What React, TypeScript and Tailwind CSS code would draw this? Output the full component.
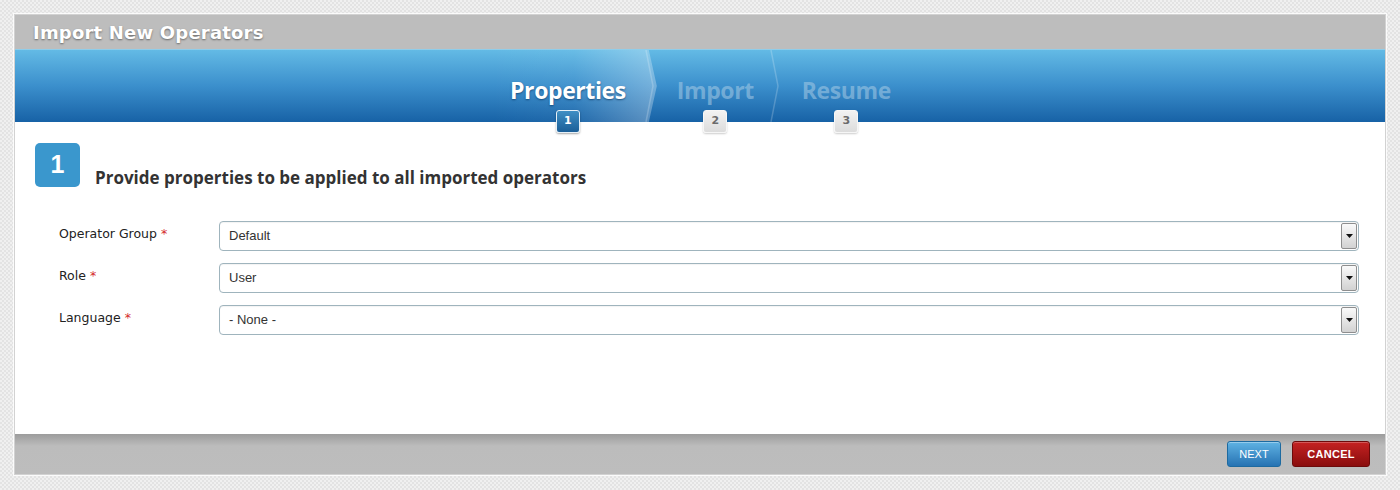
import React, { FC } from 'react';

const steps = [
  { label: 'Properties', n: 1, pad: 'pl-[19px] pr-[25px]' },
  { label: 'Import', n: 2, pad: 'pl-[26px] pr-[22px]' },
  { label: 'Resume', n: 3, pad: 'px-[26px]' },
];

const fields = [
  { label: 'Operator Group', value: 'Default' },
  { label: 'Role', value: 'User' },
  { label: 'Language', value: '- None -' },
];

const Chevron: FC = () => (
  <svg className="absolute right-[-4px] top-0 h-full w-[10px]" viewBox="0 0 10 73" preserveAspectRatio="none">
    <path d="M1 0 L8 36.5 L1 73" fill="none" stroke="rgba(255,255,255,0.2)" strokeWidth="1.5" />
  </svg>
);

const StepTab: FC<{ label: string; n: number; pad: string; active: boolean; last: boolean }> = ({ label, n, pad, active, last }) => (
  <div className={`relative flex h-full flex-col items-center justify-end ${pad}`}>
    {active && (
      <div className="absolute inset-y-0 left-0 right-[-6px] bg-gradient-to-r from-transparent via-[rgba(255,255,255,0.04)] to-[rgba(255,255,255,0.3)] [clip-path:polygon(0_0,calc(100%-8px)_0,100%_50%,calc(100%-8px)_100%,0_100%)]" />
    )}
    {!last && <Chevron />}
    <span
      className={`relative text-[23px] font-bold leading-none tracking-[-0.4px] font-['Open_Sans',sans-serif] ${active ? 'text-white [text-shadow:0_1px_2px_rgba(0,40,80,0.6)]' : 'text-[rgba(170,205,230,0.55)]'}`}
    >
      {label}
    </span>
    <span
      className={`relative z-10 mt-[8px] -mb-[11px] flex h-[23px] w-[24px] items-center justify-center rounded-[3px] text-[11px] font-bold font-['DejaVu_Sans',sans-serif] ${active ? 'border border-[#e6f0f7] bg-gradient-to-b from-[#3f8fc4] to-[#1b5f98] text-white shadow-[0_1px_2px_rgba(0,0,0,0.35)]' : 'border border-[#f6f6f6] bg-gradient-to-b from-[#f2f2f2] to-[#dcdcdc] text-[#6b6b6b] shadow-[0_1px_2px_rgba(0,0,0,0.2)]'}`}
    >
      {n}
    </span>
  </div>
);

const SelectBox: FC<{ value: string }> = ({ value }) => (
  <div className="flex h-[30px] flex-1 items-center rounded-[4px] border border-[#9fb4bd] bg-white pl-[9px] pr-[1px] shadow-[inset_0_1px_1px_rgba(0,0,0,0.05)]">
    <span className="flex-1 text-[13px] text-[#333] font-['Liberation_Sans',Arial,sans-serif]">{value}</span>
    <span className="flex h-[26px] w-[16px] items-center justify-center rounded-[2px] border border-[#8e8e8e] bg-gradient-to-b from-[#fafafa] to-[#d2d2d2]">
      <svg width="7" height="4" viewBox="0 0 7 4">
        <path d="M0 0 H7 L3.5 4 Z" fill="#111" />
      </svg>
    </span>
  </div>
);

export default function App() {
  return (
    <div className="h-[490px] w-[1400px] bg-[#ebebeb] bg-[repeating-conic-gradient(#e3e3e3_0%_25%,#f0f0f0_0%_50%)] bg-[length:4px_4px] pl-[14px] pr-[14px] pt-[14px]">
      <div className="flex w-[1372px] flex-col border border-[#d2d2d2] bg-white shadow-[0_0_0_1px_rgba(255,255,255,0.8)]">
        {/* title bar */}
        <div className="flex h-[34px] items-center bg-[#bdbdbd] pl-[18px]">
          <h1 className="text-[18px] font-bold tracking-[0.2px] text-white font-['DejaVu_Sans',sans-serif] [text-shadow:0_1px_2px_rgba(0,0,0,0.45)]">
            Import New Operators
          </h1>
        </div>

        {/* wizard steps */}
        <div className="relative z-10 flex h-[73px] justify-center border-t border-[#8fcdea] bg-gradient-to-b from-[#63bae5] via-[#3b8fcc] to-[#1762a6]">
          <div className="ml-[8px] flex h-full">
            {steps.map((s, i) => (
              <StepTab key={s.n} label={s.label} n={s.n} pad={s.pad} active={i === 0} last={i === steps.length - 1} />
            ))}
          </div>
        </div>

        {/* content */}
        <div className="flex h-[312px] flex-col bg-white pl-[20px] pr-[26px] pt-[21px]">
          <div className="flex items-end">
            <div className="flex h-[44px] w-[45px] items-center justify-center rounded-[5px] bg-[#3a97cd] text-[25px] font-bold text-white font-['Liberation_Sans',Arial,sans-serif]">
              1
            </div>
            <h2 className="mb-[-3px] ml-[15px] text-[17px] font-bold text-[#333] font-['Open_Sans',sans-serif]">
              Provide properties to be applied to all imported operators
            </h2>
          </div>

          <div className="mt-[34px] flex flex-col gap-[12px] pl-[24px]">
            {fields.map((f) => (
              <div key={f.label} className="flex items-start">
                <label className="w-[160px] pt-[4px] text-[12.5px] text-[#222] font-['DejaVu_Sans',sans-serif]">
                  {f.label} <span className="text-[#d42a2a]">*</span>
                </label>
                <SelectBox value={f.value} />
              </div>
            ))}
          </div>
        </div>

        {/* footer */}
        <div className="flex h-[40px] items-center justify-end gap-[11px] bg-gradient-to-b from-[#9c9c9c] via-[#bcbcbc] via-30% to-[#bdbdbd] pr-[15px]">
          <button className="h-[26px] w-[54px] rounded-[3px] border border-[#1d6aa0] bg-gradient-to-b from-[#5fb2e3] to-[#2673b3] text-[11px] text-white font-['Liberation_Sans',Arial,sans-serif] shadow-[inset_0_1px_0_rgba(255,255,255,0.35)]">
            NEXT
          </button>
          <button className="h-[26px] w-[78px] rounded-[3px] border border-[#6d0a0a] bg-gradient-to-b from-[#c52222] to-[#8a0d0d] text-[11px] font-bold tracking-[0.3px] text-white font-['Liberation_Sans',Arial,sans-serif] shadow-[inset_0_1px_0_rgba(255,255,255,0.25)]">
            CANCEL
          </button>
        </div>
      </div>
    </div>
  );
}
